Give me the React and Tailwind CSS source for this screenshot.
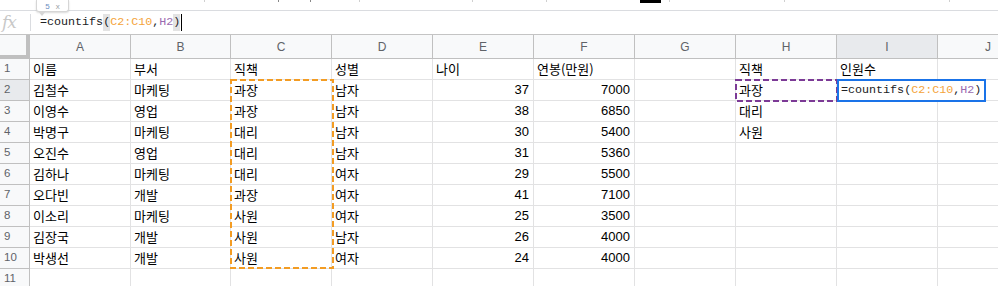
const cols = [
  { key: "A", w: "w-[101px]" },
  { key: "B", w: "w-[100px]" },
  { key: "C", w: "w-[101px]" },
  { key: "D", w: "w-[101px]" },
  { key: "E", w: "w-[101px]" },
  { key: "F", w: "w-[101px]" },
  { key: "G", w: "w-[101px]" },
  { key: "H", w: "w-[101px]" },
  { key: "I", w: "w-[101px]" },
  { key: "J", w: "w-[101px]" },
];

const rows = [
  ["이름", "부서", "직책", "성별", "나이", "연봉(만원)", "", "직책", "인원수"],
  ["김철수", "마케팅", "과장", "남자", 37, 7000, "", "과장", ""],
  ["이영수", "영업", "과장", "남자", 38, 6850, "", "대리", ""],
  ["박명구", "마케팅", "대리", "남자", 30, 5400, "", "사원", ""],
  ["오진수", "영업", "대리", "남자", 31, 5360, "", "", ""],
  ["김하나", "마케팅", "대리", "여자", 29, 5500, "", "", ""],
  ["오다빈", "개발", "과장", "여자", 41, 7100, "", "", ""],
  ["이소리", "마케팅", "사원", "여자", 25, 3500, "", "", ""],
  ["김장국", "개발", "사원", "남자", 26, 4000, "", "", ""],
  ["박생선", "개발", "사원", "여자", 24, 4000, "", "", ""],
  ["", "", "", "", "", "", "", "", ""],
];

// faint separators left over from the cropped toolbar
const marks = [
  { w: "w-[205px]", c: "bg-[#d0d0d0]" },
  { w: "w-[74px]", c: "bg-[#888]" },
  { w: "w-[32px]", c: "bg-[#888]" },
  { w: "w-[49px]", c: "bg-[#d0d0d0]" },
  { w: "w-[113px]", c: "bg-[#d0d0d0]" },
  { w: "w-[74px]", c: "bg-[#d0d0d0]" },
];

const Formula = ({ parens }) => (
  <>
    <span>=countifs</span>
    <span className={parens ? "bg-[#e3e3e3]" : ""}>(</span>
    <span className="text-[#f4a43a]">C2:C10</span>
    <span>,</span>
    <span className="text-[#9a6bb0]">H2</span>
    <span className={parens ? "bg-[#e3e3e3]" : ""}>)</span>
  </>
);

const Marquee = ({ className, color }) => (
  <svg className={"absolute pointer-events-none " + className} preserveAspectRatio="none">
    <rect x="1" y="1" width="calc(100% - 2px)" height="calc(100% - 2px)" fill="none" stroke={color} strokeWidth="2" strokeDasharray="6 3" />
  </svg>
);

export default function App() {
  return (
    <div className="w-[998px] h-[286px] overflow-hidden bg-white relative font-['Liberation_Sans',sans-serif]">
      {/* toolbar remnant */}
      <div className="h-[11px] border-b border-[#dadce0] flex items-start">
        {marks.map((m, i) => (
          <div key={i} className={`${m.w} shrink-0 flex justify-end`}>
            <div className={`h-[2px] w-px ${m.c}`} />
          </div>
        ))}
        <div className="ml-[93px] h-[3px] w-[21px] bg-black" />
        <div className="ml-[8px] h-[2px] w-px bg-[#d0d0d0]" />
        <div className="ml-[114px] h-[2px] w-px bg-[#d0d0d0]" />
        <div className="ml-[164px] h-[2px] w-px bg-[#d0d0d0]" />
      </div>

      {/* formula bar */}
      <div className="h-[24px] border-b border-[#c4c4c4] flex items-center">
        <div className="w-[30px] flex items-center">
          <span className="pl-[2px] italic text-[17px] text-[#c8c8c8] font-['DejaVu_Serif',serif] leading-none tracking-[-1px]">fx</span>
        </div>
        <div className="h-[17px] w-px bg-[#dadce0]" />
        <div className="pl-[9px] flex items-center font-['Liberation_Mono',monospace] text-[11.7px] text-[#202124]">
          <Formula parens />
          <span className="ml-px h-[17px] w-px bg-black" />
        </div>
      </div>

      {/* formula help tooltip, cropped at the top edge */}
      <div className="absolute left-[36px] top-0 w-[33px] h-[12px] bg-white border border-t-0 border-[#d6d6d6] rounded-b-[3px] shadow-[0_1px_2px_rgba(0,0,0,0.15)] flex items-end justify-center gap-[6px] text-[8px] leading-[9px] text-[#9aa0a6]">
        <span className="text-[#6c8ebf]">5</span>
        <span>x</span>
      </div>
      <div className="absolute left-[38px] top-[11px] w-0 h-0 border-l-[4px] border-r-[4px] border-t-[5px] border-l-transparent border-r-transparent border-t-[#d6d6d6]" />

      {/* grid */}
      <div className="relative">
        <div className="flex h-[24px]">
          <div className="w-[30px] shrink-0 bg-[#f8f9fa] border-r-[4px] border-b-[4px] border-[#c0c0c0]" />
          {cols.map((c) => (
            <div
              key={c.key}
              className={`${c.w} shrink-0 border-r border-b border-[#c0c0c0] flex items-center justify-center text-[12px] text-[#5f6368] ${c.key === "I" ? "bg-[#e8eaed]" : "bg-[#f8f9fa]"}`}
            >
              {c.key}
            </div>
          ))}
        </div>

        {rows.map((r, i) => (
          <div key={i} className="flex h-[21px]">
            <div className={`w-[30px] shrink-0 border-r border-b border-[#c0c0c0] flex items-center pl-[4px] text-[11.5px] text-[#5f6368] ${i === 1 ? "bg-[#e8eaed]" : "bg-[#f8f9fa]"}`}>
              {i + 1}
            </div>
            {cols.map((c, j) => {
              const v = r[j] ?? "";
              const num = typeof v === "number";
              return (
                <div
                  key={c.key}
                  className={`${c.w} shrink-0 border-r border-b border-[#e2e2e3] flex items-center text-[13px] text-black whitespace-nowrap ${num ? "justify-end pr-[4px] font-['Liberation_Sans',sans-serif]" : "pl-[3px] font-['Noto_Sans_CJK_KR','Liberation_Sans',sans-serif]"}`}
                >
                  {v}
                </div>
              );
            })}
          </div>
        ))}

        {/* copy/reference marquees */}
        <Marquee className="left-[230px] top-[44px] w-[104px] h-[190px]" color="#f39c23" />
        <Marquee className="left-[735px] top-[44px] w-[103px] h-[23px]" color="#7c3a96" />

        {/* in-cell editor */}
        <div className="absolute left-[837px] top-[44px] w-[149px] h-[23px] bg-white border-2 border-[#1a73e8] flex items-center pl-[2px] font-['Liberation_Mono',monospace] text-[11.7px] text-[#202124] whitespace-nowrap">
          <Formula />
        </div>
      </div>
    </div>
  );
}
